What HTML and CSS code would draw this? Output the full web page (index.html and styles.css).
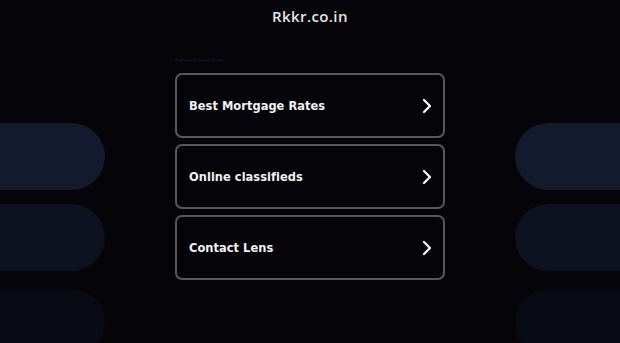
FILE: index.html
```html
<!DOCTYPE html>
<html>
<head>
<meta charset="utf-8">
<link rel="stylesheet" href="styles.css">
</head>
<body>
<div class="deco deco-left">
  <div class="pill p1"></div>
  <div class="pill p2"></div>
  <div class="pill p3"></div>
</div>
<div class="deco deco-right">
  <div class="pill p1"></div>
  <div class="pill p2"></div>
  <div class="pill p3"></div>
</div>
<header class="top"><h1 class="domain">Rkkr.co.in</h1></header>
<main class="main">
  <div class="related">Related Searches</div>
  <a class="card" href="#"><span>Best Mortgage Rates</span><svg class="chev" width="10" height="16" viewBox="0 0 10 16"><path d="M2 2 L8 8 L2 14" fill="none" stroke="#fff" stroke-width="2.2" stroke-linecap="round" stroke-linejoin="round"/></svg></a>
  <a class="card" href="#"><span>Online classifieds</span><svg class="chev" width="10" height="16" viewBox="0 0 10 16"><path d="M2 2 L8 8 L2 14" fill="none" stroke="#fff" stroke-width="2.2" stroke-linecap="round" stroke-linejoin="round"/></svg></a>
  <a class="card" href="#"><span>Contact Lens</span><svg class="chev" width="10" height="16" viewBox="0 0 10 16"><path d="M2 2 L8 8 L2 14" fill="none" stroke="#fff" stroke-width="2.2" stroke-linecap="round" stroke-linejoin="round"/></svg></a>
</main>
</body>
</html>
```
FILE: styles.css
```css
html, body { margin: 0; padding: 0; }
body {
  width: 620px; height: 343px; overflow: hidden;
  background: #050409;
  font-family: "Open Sans", sans-serif;
  position: relative;
}
.deco { position: absolute; top: 123px; display: flex; flex-direction: column; gap: 14px; width: 105px; }
.deco-left { left: 0; }
.deco-right { left: 515px; }
.pill { width: 105px; height: 67px; }
.deco-left .pill { border-radius: 0 34px 34px 0; }
.deco-right .pill { border-radius: 34px 0 0 34px; }
.p1 { background: #141a2e; }
.p2 { background: #0d1120; }
.p3 { background: #080a14; margin-top: 4px; }
.top { position: relative; height: 34px; display: flex; justify-content: center; }
.domain {
  margin: 6px 0 0; font-size: 15px; font-weight: 600; color: #e6e6e6;
  font-family: "Open Sans", sans-serif; letter-spacing: 0.4px; line-height: 20px;
}
.main { position: relative; width: 270px; margin: 22px auto 0; }
.related { font-size: 6px; color: #1c1f2e; height: 10px; line-height: 8px; margin-bottom: 7px; }
.card {
  display: flex; align-items: center; justify-content: space-between;
  box-sizing: border-box; height: 65px;
  border: 2px solid #58585c; border-radius: 7px;
  background: #050409; color: #f2f2f2; text-decoration: none;
  padding: 0 11px 0 12px; margin-bottom: 6px;
  font-family: "DejaVu Sans Condensed", "DejaVu Sans", sans-serif;
  font-stretch: condensed;
  font-size: 12.7px; font-weight: bold; letter-spacing: 0.05px;
}
.chev { display: block; }
```
